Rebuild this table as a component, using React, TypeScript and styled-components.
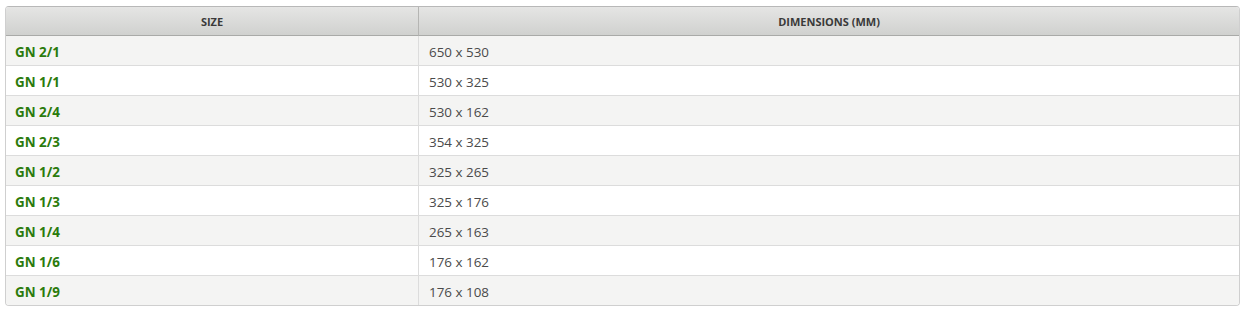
import React from 'react';
import styled, { createGlobalStyle } from 'styled-components';

const GlobalStyle = createGlobalStyle`
  html, body {
    margin: 0;
    padding: 0;
    background: #fff;
  }
  body {
    font-family: "Open Sans", "Liberation Sans", sans-serif;
  }
`

const Page = styled.div`
  padding: 6px 5px 0 5px;
`

const Table = styled.table`
  width: 100%;
  border-collapse: separate;
  border-spacing: 0;
  border: 1px solid #cfcfcf;
  border-top-color: #b8b8b8;
  border-radius: 4px;
  overflow: hidden;
  font-size: 13.4px;
  color: #444;
`

const Th = styled.th`
  height: 27px;
  padding: 1px 10px 0;
  background: linear-gradient(to bottom, #e5e5e4, #d0d1cf);
  border-bottom: 1px solid #a9aaa8;
  font-size: 11px;
  font-weight: 700;
  color: #3a3a3a;
  text-transform: uppercase;
  text-align: center;
  &:first-child {
    width: 33.5%;
    border-right: 1px solid #b5b5b3;
  }
`

const Tr = styled.tr<{ $odd: boolean }>`
  background: ${p => (p.$odd ? '#f4f4f3' : '#ffffff')};
  &:last-child td {
    border-bottom: none;
  }
`

const Td = styled.td<{ $size?: boolean }>`
  height: 27px;
  padding: 2px 10px 0 10px;
  border-bottom: 1px solid #dcdcdc;
  vertical-align: middle;
  ${p => p.$size
    ? `border-right: 1px solid #dcdcdc; font-weight: 700; color: #2b7b0c; padding-left: 9px;`
    : `color: #4a4a4a;`}
`

const sizes: [string, string][] = [
  ['GN 2/1', '650 x 530'],
  ['GN 1/1', '530 x 325'],
  ['GN 2/4', '530 x 162'],
  ['GN 2/3', '354 x 325'],
  ['GN 1/2', '325 x 265'],
  ['GN 1/3', '325 x 176'],
  ['GN 1/4', '265 x 163'],
  ['GN 1/6', '176 x 162'],
  ['GN 1/9', '176 x 108'],
]

export default function App() {
  return (
    <Page>
      <GlobalStyle />
      <Table>
        <thead>
          <tr>
            <Th>Size</Th>
            <Th>Dimensions (mm)</Th>
          </tr>
        </thead>
        <tbody>
          {sizes.map(([name, dim], i) => (
            <Tr key={name} $odd={i % 2 === 0}>
              <Td $size>{name}</Td>
              <Td>{dim}</Td>
            </Tr>
          ))}
        </tbody>
      </Table>
    </Page>
  )
}
